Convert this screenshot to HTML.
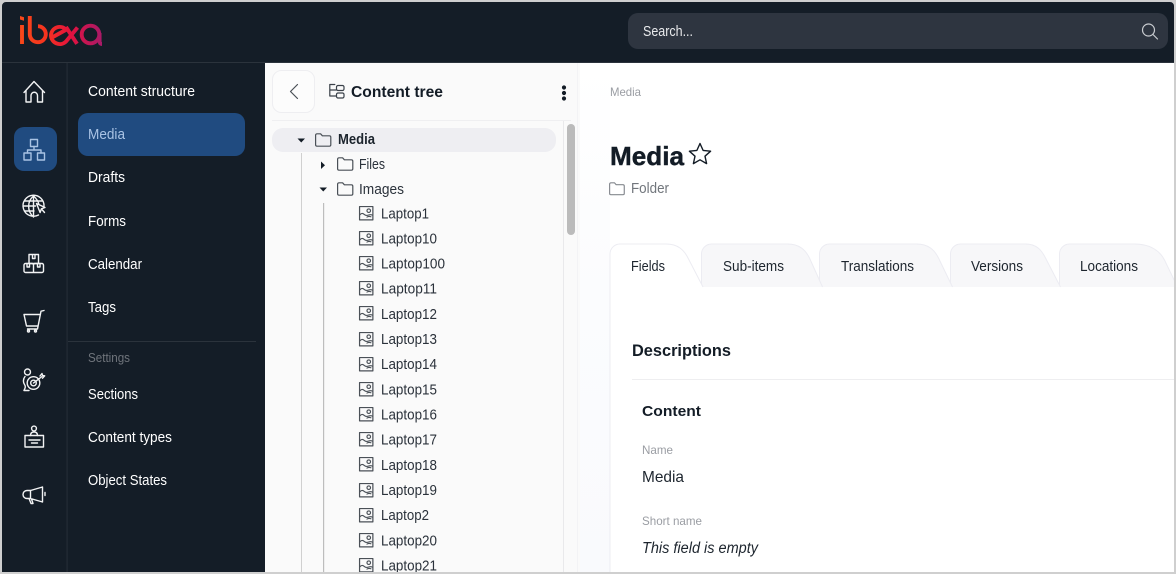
<!DOCTYPE html>
<html lang="en"><head><meta charset="utf-8"><title>Media - Content structure</title>
<style>
html,body{margin:0;padding:0;background:#cfcfcf;width:1176px;height:574px;overflow:hidden}
svg{display:block}
text{font-family:"Liberation Sans",Arial,sans-serif;white-space:pre}
.n{font-size:14.5px;fill:#fff}
.t{font-size:14.5px;fill:#2b323b}
.i{fill:none;stroke:#f2f3f4;stroke-width:1.4;stroke-linecap:round;stroke-linejoin:round}
.g{fill:none;stroke:#4a5057;stroke-width:1.2;stroke-linejoin:round;stroke-linecap:round}
.tabf{fill:#f7f7f9;stroke:none}
.tabs{fill:none;stroke:#ececf2;stroke-width:1}
</style></head><body>
<svg width="1176" height="574" viewBox="0 0 1176 574" xmlns="http://www.w3.org/2000/svg">
<defs>
<linearGradient id="lg" gradientUnits="userSpaceOnUse" x1="20" y1="0" x2="102" y2="0">
<stop offset="0" stop-color="#f9481a"/><stop offset=".32" stop-color="#f5331f"/><stop offset=".62" stop-color="#e2123f"/><stop offset="1" stop-color="#a81a68"/>
</linearGradient>
<linearGradient id="side" x1="0" y1="0" x2="0" y2="1">
<stop offset="0" stop-color="#ffffff"/><stop offset=".45" stop-color="#fbfcfe"/><stop offset="1" stop-color="#f9fafd"/>
</linearGradient>
<symbol id="folder" viewBox="0 0 16 14" overflow="visible">
<path class="g" d="M.6 2.2a1.4 1.4 0 0 1 1.4-1.4h3.6l1.8 2h7a1.4 1.4 0 0 1 1.4 1.4v7.6a1.4 1.4 0 0 1-1.4 1.4H2a1.4 1.4 0 0 1-1.4-1.4z"/>
</symbol>
<symbol id="folder2" viewBox="0 0 16 14" overflow="visible">
<path class="g" style="stroke:#85898f" d="M.6 2.2a1.4 1.4 0 0 1 1.4-1.4h3.6l1.8 2h7a1.4 1.4 0 0 1 1.4 1.4v7.6a1.4 1.4 0 0 1-1.4 1.4H2a1.4 1.4 0 0 1-1.4-1.4z"/>
</symbol>
<symbol id="img" viewBox="0 0 16 16" overflow="visible">
<path class="g" d="M.6.6h14.2v14.2H.6z" style="stroke-width:1.3"/>
<circle class="g" cx="10.4" cy="5" r="1.9"/>
<path class="g" d="M1 9.4c1.8-2.2 3.3-1.6 4.6-.4s2.700 1.400 4.700.6 2.800-.5 4.100.2M8.500 11.800c1.300-.8 2.800-.9 4.200-.3"/>
</symbol>
</defs>

<!-- page frame -->
<rect x="2" y="2" width="1172" height="570" fill="#fff"/>

<!-- top bar -->
<rect x="2" y="2" width="1172" height="60" fill="#141d27"/>
<rect x="2" y="62" width="1172" height="1" fill="#2b333c"/>
<g fill="none" stroke="url(#lg)" stroke-width="3.900" role="img" aria-label="ibexa">
<title>ibexa</title>
<path d="M22 25v19"/><path d="M20 16l4 1.200v3.500l-4-1.200z" fill="url(#lg)" stroke="none"/>
<path d="M29.800 16v18.500A8 8 0 1 0 38 26.200"/>
<path d="M66 29.500A8.800 8.800 0 0 0 51 35a8.800 8.800 0 0 0 15 6.500L77.500 27.500M52 37.500L66.500 29.500M66 27l11 16.800"/>
<circle cx="90.500" cy="34.500" r="8.800"/>
<path d="M99.600 33v8q0 3 2.400 3"/>
</g>
<rect x="628" y="13" width="540" height="36" rx="10" fill="#2e3540"/>
<text x="643" y="36" font-size="14.500" fill="#e9eaec" textLength="50" lengthAdjust="spacingAndGlyphs">Search...</text>
<g fill="none" stroke="#c9ccd0" stroke-width="1.200" stroke-linecap="round"><circle cx="1148.500" cy="30" r="6"/><path d="M1153 34.500l4.500 4.500"/></g>

<!-- left nav -->
<rect x="2" y="63" width="263" height="510" fill="#141d27"/>
<rect x="66.500" y="63" width="1.200" height="510" fill="#232c36"/>
<rect x="14" y="127" width="43" height="44" rx="10" fill="#204b80"/>

<!-- rail icons -->
<path class="i" d="M24 92.500L34 81.500l10.500 11M26 90.500V102h5v-6.500a3 3 0 0 1 6.500 0V102h5V90.500"/>
<g class="i" style="stroke:#a9c3e4">
<rect x="30.500" y="139.500" width="7" height="7"/><rect x="24" y="153" width="7" height="7"/><rect x="37.500" y="153" width="7" height="7"/>
<path d="M34 146.500v3.500M27.500 153v-3h13.500v3"/>
</g>
<g class="i">
<path d="M38.500 215a10.500 10.500 0 1 1 5.500-8.500M33.500 196c-6.500 5.500-6.500 15 0 21M33.500 196c3.500 3 5 6 5.500 9M33.500 196v21M23.500 206h12M25 201h17M25 211h9"/>
<path d="M36.500 203.500l8.500 4-3.600 1.300-1.300 3.700zM41.500 209l3 3.500" fill="#141d27"/>
</g>
<g class="i">
<path d="M24 265a1.500 1.500 0 0 1 1.500-1.500h6.500a1.500 1.500 0 0 1 1.500 1.500v7.500H25.500A1.500 1.500 0 0 1 24 271zM33.500 265a1.500 1.500 0 0 1 1.500-1.500h7a1.500 1.500 0 0 1 1.500 1.500v6a1.500 1.500 0 0 1-1.500 1.500h-8.500z"/>
<path d="M29 254.500h9.500v9h-9.500zM32.500 254.500v4h2.500v-4M27 263.500v3.500h2.500v-3.500M37.500 263.500v3.500h2.500v-3.500"/>
</g>
<g class="i">
<path d="M44 310.500l-3 .7-3.500 17.800H27.500M24 314.500h16M24 314.500l2.500 11.500h11.500"/>
<circle cx="28.500" cy="331" r="1"/><circle cx="35.500" cy="331" r="1"/>
</g>
<g class="i">
<circle cx="27.500" cy="372" r="3"/>
<path d="M25 376.500c-2 2.500-2 6-.5 8 1.500 2 .5 4-.5 6h5"/>
<circle cx="33.500" cy="383" r="6.300"/><circle cx="33.500" cy="383" r="2.800"/>
<path d="M33.500 383l8.500-6.500M40 376l2-2.500 .5 2 2.200 .3-2.200 2.400"/>
</g>
<g class="i">
<rect x="25" y="435.500" width="18.500" height="11.500"/>
<circle cx="34" cy="428.500" r="2.400"/><path d="M30.500 435.500c0-2 1-3.500 3.500-3.500s3.500 1.500 3.500 3.500"/>
<path d="M29 440h11M31.500 443h6"/>
</g>
<g class="i">
<path d="M42.500 487v15l-12-3.500H27a3.500 3.500 0 0 1 0-8h3.500zM30.500 490.500v8M29 498.500l2 5h2l-1.500-4.500M45 492.500v3"/>
</g>

<!-- nav -->
<rect x="78" y="113" width="167" height="43" rx="10" fill="#204b80"/>
<text class="n" x="88" y="96" textLength="107" lengthAdjust="spacingAndGlyphs">Content structure</text>
<text class="n" x="88" y="139" textLength="37" lengthAdjust="spacingAndGlyphs" style="fill:#a9c3e4">Media</text>
<text class="n" x="88" y="182" textLength="37" lengthAdjust="spacingAndGlyphs">Drafts</text>
<text class="n" x="88" y="226" textLength="38" lengthAdjust="spacingAndGlyphs">Forms</text>
<text class="n" x="88" y="269" textLength="54" lengthAdjust="spacingAndGlyphs">Calendar</text>
<text class="n" x="88" y="312" textLength="28" lengthAdjust="spacingAndGlyphs">Tags</text>
<rect x="68" y="341" width="188" height="1" fill="#2b333c"/>
<text x="88" y="362" font-size="12.500" fill="#6f747b" textLength="42" lengthAdjust="spacingAndGlyphs">Settings</text>
<text class="n" x="88" y="399" textLength="50" lengthAdjust="spacingAndGlyphs">Sections</text>
<text class="n" x="88" y="442" textLength="84" lengthAdjust="spacingAndGlyphs">Content types</text>
<text class="n" x="88" y="485" textLength="79" lengthAdjust="spacingAndGlyphs">Object States</text>

<!-- tree panel -->
<rect x="265" y="63" width="315" height="510" fill="#fafafa"/>
<rect x="577" y="63" width="1" height="510" fill="#f3f3f5"/>
<rect x="272.500" y="70.500" width="42" height="42" rx="9" fill="#fcfcfc" stroke="#eeeef1"/>
<path d="M297.500 84.500l-7 7 7 7" fill="none" stroke="#4a5057" stroke-width="1.200" stroke-linecap="round" stroke-linejoin="round"/>
<g class="g" style="stroke:#3a4149">
<path d="M329.800 84.500h5M329.800 84.500V96h6.500M329.800 90h6.500"/>
<rect x="336.500" y="85.500" width="7.500" height="5" rx="1.500"/><rect x="336.500" y="93" width="7.500" height="5" rx="1.500"/>
</g>
<text x="351" y="97" font-size="15.500" font-weight="700" fill="#131c26" textLength="92" lengthAdjust="spacingAndGlyphs">Content tree</text>
<g fill="#131c26"><circle cx="564" cy="87.500" r="2.100"/><circle cx="564" cy="93" r="2.100"/><circle cx="564" cy="98.500" r="2.100"/></g>
<rect x="272" y="120" width="299" height="1" fill="#efeff1"/>
<rect x="563" y="121" width="1" height="452" fill="#e9e9eb"/>
<rect x="567" y="124" width="8" height="111" rx="4" fill="#bbbbbb"/>
<rect x="272" y="128" width="284" height="24" rx="11" fill="#eeeef2"/>

<rect x="301" y="153" width="1" height="420" fill="#d0d0d0"/>
<rect x="323" y="203" width="1.200" height="370" fill="#bdbdbd"/>
<path d="M297.500 138.500h7.500l-3.750 4z" fill="#131c26"/>
<path d="M321 161.500v7.500l4-3.750z" fill="#131c26"/>
<path d="M319.500 187.500h7.500l-3.750 4z" fill="#131c26"/>

<use href="#folder" x="315" y="133" width="16" height="14"/>
<use href="#folder" x="337" y="157" width="16" height="14"/>
<use href="#folder" x="337" y="182" width="16" height="14"/>
<text x="338" y="144" font-size="14.500" font-weight="700" fill="#1d252e" textLength="37" lengthAdjust="spacingAndGlyphs">Media</text>
<text class="t" x="359" y="169" textLength="26" lengthAdjust="spacingAndGlyphs">Files</text>
<text class="t" x="359" y="194" textLength="45" lengthAdjust="spacingAndGlyphs">Images</text>

<use href="#img" x="359" y="206" width="15" height="15"/><text class="t" x="381" y="218.500" textLength="48" lengthAdjust="spacingAndGlyphs">Laptop1</text>
<use href="#img" x="359" y="231" width="15" height="15"/><text class="t" x="381" y="243.500" textLength="56" lengthAdjust="spacingAndGlyphs">Laptop10</text>
<use href="#img" x="359" y="256" width="15" height="15"/><text class="t" x="381" y="268.500" textLength="64" lengthAdjust="spacingAndGlyphs">Laptop100</text>
<use href="#img" x="359" y="281" width="15" height="15"/><text class="t" x="381" y="293.700" textLength="56" lengthAdjust="spacingAndGlyphs">Laptop11</text>
<use href="#img" x="359" y="306" width="15" height="15"/><text class="t" x="381" y="318.900" textLength="56" lengthAdjust="spacingAndGlyphs">Laptop12</text>
<use href="#img" x="359" y="332" width="15" height="15"/><text class="t" x="381" y="344" textLength="56" lengthAdjust="spacingAndGlyphs">Laptop13</text>
<use href="#img" x="359" y="357" width="15" height="15"/><text class="t" x="381" y="369.200" textLength="56" lengthAdjust="spacingAndGlyphs">Laptop14</text>
<use href="#img" x="359" y="382" width="15" height="15"/><text class="t" x="381" y="394.400" textLength="56" lengthAdjust="spacingAndGlyphs">Laptop15</text>
<use href="#img" x="359" y="407" width="15" height="15"/><text class="t" x="381" y="419.500" textLength="56" lengthAdjust="spacingAndGlyphs">Laptop16</text>
<use href="#img" x="359" y="432" width="15" height="15"/><text class="t" x="381" y="444.700" textLength="56" lengthAdjust="spacingAndGlyphs">Laptop17</text>
<use href="#img" x="359" y="457" width="15" height="15"/><text class="t" x="381" y="469.900" textLength="56" lengthAdjust="spacingAndGlyphs">Laptop18</text>
<use href="#img" x="359" y="483" width="15" height="15"/><text class="t" x="381" y="495" textLength="56" lengthAdjust="spacingAndGlyphs">Laptop19</text>
<use href="#img" x="359" y="508" width="15" height="15"/><text class="t" x="381" y="520.200" textLength="48" lengthAdjust="spacingAndGlyphs">Laptop2</text>
<use href="#img" x="359" y="533" width="15" height="15"/><text class="t" x="381" y="545.400" textLength="56" lengthAdjust="spacingAndGlyphs">Laptop20</text>
<use href="#img" x="359" y="558" width="15" height="15"/><text class="t" x="381" y="570.500" textLength="56" lengthAdjust="spacingAndGlyphs">Laptop21</text>

<!-- main -->
<rect x="580" y="63" width="30" height="510" fill="url(#side)"/>
<text x="610" y="96" font-size="12" fill="#9a9da3" textLength="31" lengthAdjust="spacingAndGlyphs">Media</text>
<text x="610" y="165" font-size="26" font-weight="700" fill="#131c26" stroke="#131c26" stroke-width=".4" textLength="74" lengthAdjust="spacingAndGlyphs">Media</text>
<path d="M700 143.500l3.100 6.900 7.500.8-5.600 5 1.600 7.400-6.600-3.800-6.600 3.800 1.600-7.400-5.600-5 7.500-.8z" fill="none" stroke="#131c26" stroke-width="1.400" stroke-linejoin="round"/>
<use href="#folder2" x="609" y="182" width="15.500" height="13.500"/>
<text x="631" y="193" font-size="14.500" fill="#71767c" textLength="38" lengthAdjust="spacingAndGlyphs">Folder</text>

<!-- tabs -->
<path class="tabf" d="M1059.500 287V254a10 10 0 0 1 10-10h65c17 0 26 8 30 16l13 27z"/>
<path class="tabs" d="M1059.500 287V254a10 10 0 0 1 10-10h65c17 0 26 8 30 16l13 27"/>
<path class="tabf" d="M950.500 287V254a10 10 0 0 1 10-10h65c11 0 16 6 20 14l15 29z"/>
<path class="tabs" d="M950.500 287V254a10 10 0 0 1 10-10h65c11 0 16 6 20 14l15 29"/>
<path class="tabf" d="M819.500 287V254a10 10 0 0 1 10-10h87c12 0 18 6 22 14l14 29z"/>
<path class="tabs" d="M819.500 287V254a10 10 0 0 1 10-10h87c12 0 18 6 22 14l14 29"/>
<path class="tabf" d="M701.500 287V254a10 10 0 0 1 10-10h76c12 0 18 6 22 14l13 29z"/>
<path class="tabs" d="M701.500 287V254a10 10 0 0 1 10-10h76c12 0 18 6 22 14l13 29"/>
<path d="M610 574V254a10 10 0 0 1 10-10h46c12 0 18 6 22 14l15 29v2h-93" fill="#fff"/>
<path d="M610 574V254a10 10 0 0 1 10-10h46c12 0 18 6 22 14l15 29" fill="none" stroke="#ececf2"/>
<text class="t" x="631" y="271" textLength="34" lengthAdjust="spacingAndGlyphs" style="fill:#1d252e">Fields</text>
<text class="t" x="723" y="271" textLength="61" lengthAdjust="spacingAndGlyphs" style="fill:#1d252e">Sub-items</text>
<text class="t" x="841" y="271" textLength="73" lengthAdjust="spacingAndGlyphs" style="fill:#1d252e">Translations</text>
<text class="t" x="971" y="271" textLength="52" lengthAdjust="spacingAndGlyphs" style="fill:#1d252e">Versions</text>
<text class="t" x="1080" y="271" textLength="58" lengthAdjust="spacingAndGlyphs" style="fill:#1d252e">Locations</text>

<text x="632" y="356" font-size="17" font-weight="700" fill="#131c26" textLength="99" lengthAdjust="spacingAndGlyphs">Descriptions</text>
<rect x="632" y="379" width="542" height="1" fill="#eeeef0"/>
<text x="642" y="416" font-size="15" font-weight="700" fill="#131c26" textLength="59" lengthAdjust="spacingAndGlyphs">Content</text>
<text x="642" y="454" font-size="12" fill="#9a9da3" textLength="31" lengthAdjust="spacingAndGlyphs">Name</text>
<text x="642" y="482" font-size="16" fill="#1d252e" textLength="42" lengthAdjust="spacingAndGlyphs">Media</text>
<text x="642" y="525" font-size="12" fill="#9a9da3" textLength="60" lengthAdjust="spacingAndGlyphs">Short name</text>
<text x="642" y="553" font-size="15.500" font-style="italic" fill="#1d252e" textLength="116" lengthAdjust="spacingAndGlyphs">This field is empty</text>

<!-- frame edges -->
<path d="M0 0h1176v574H0z M2 6a4 4 0 0 1 4-4H1170a4 4 0 0 1 4 4V572H2z" fill="#cfcfcf" fill-rule="evenodd"/>
</svg>
</body></html>
